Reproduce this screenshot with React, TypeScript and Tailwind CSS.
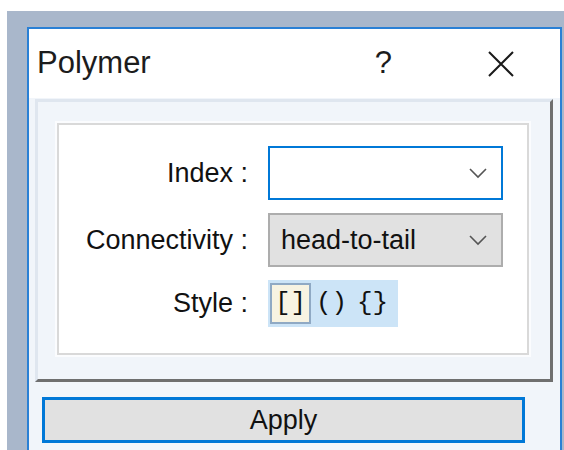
import { useState } from "react";

const Chevron = () => (
  <svg width="20" height="12" viewBox="0 0 20 12" className="shrink-0">
    <path d="M2 2 L10 10 L18 2" fill="none" stroke="#555" strokeWidth="1.6" />
  </svg>
);

const CloseIcon = () => (
  <svg width="28" height="28" viewBox="0 0 28 28">
    <path d="M2 2 L26 26 M26 2 L2 26" stroke="#1a1a1a" strokeWidth="2" />
  </svg>
);

const styles = ["[]", "()", "{}"];

export default function App() {
  const [style, setStyle] = useState(0);

  return (
    <div className="w-[564px] h-[450px] overflow-hidden bg-white pt-[11px] pl-[7px] font-['Liberation_Sans',Arial,sans-serif]">
      <div className="h-full bg-[#a9b7cb] pt-[16px] pl-[20px]">
        {/* dialog window */}
        <div className="w-[535px] h-[430px] border-x-2 border-t-2 border-[#2a80d5] bg-[#f1f5fa]">
          <div className="h-[69px] bg-white flex items-center pl-[8px] pr-[45px]">
            <span className="text-[31px] text-[#1c1c1c] flex-1">Polymer</span>
            <span className="text-[31px] text-[#1c1c1c] mr-[95px]">?</span>
            <CloseIcon />
          </div>

          <div className="pt-[1px] pl-[6px] pr-[7px]">
            {/* group frame */}
            <div className="h-[283px] border-[3px] border-t-[#dfe6ef] border-l-[#dfe6ef] border-b-[#6f6f6f] border-r-[#6f6f6f] pt-[21px] pl-[19px] pr-[21px]">
              <div className="h-[232px] bg-white border-2 border-[#d9d9d9] shadow-[0_0_0_2px_#fbfcfe] pt-[21px]">
                <div className="grid grid-cols-[189px_235px] gap-x-[20px] gap-y-[13px] items-center text-[27px] text-[#111]">
                  <span className="text-right">Index :</span>
                  <div className="h-[54px] border-2 border-[#0078d7] bg-white flex items-center justify-end pr-[13px]">
                    <Chevron />
                  </div>

                  <span className="text-right">Connectivity :</span>
                  <div className="h-[54px] border-2 border-[#adadad] bg-[#e1e1e1] flex items-center pl-[11px] pr-[13px]">
                    <span className="flex-1">head-to-tail</span>
                    <Chevron />
                  </div>

                  <span className="text-right">Style :</span>
                  <div className="flex">
                    <div className="h-[47px] w-[130px] bg-[#cce4f7] flex items-center pl-[2px]">
                      {styles.map((s, i) => (
                        <button
                          key={s}
                          onClick={() => setStyle(i)}
                          className={`h-[41px] w-[41px] flex items-center justify-center font-['Liberation_Mono',monospace] text-[26px] text-[#111] ${
                            style === i ? "bg-[#f7f3e2] border-2 border-[#8fa9c4]" : ""
                          }`}
                        >
                          {s}
                        </button>
                      ))}
                    </div>
                  </div>
                </div>
              </div>
            </div>

            <button className="mt-[15px] ml-[7px] w-[483px] h-[46px] border-[3px] border-[#0078d7] bg-[#e1e1e1] text-[27px] text-[#111] flex items-center justify-center">
              Apply
            </button>
          </div>
        </div>
      </div>
    </div>
  );
}
